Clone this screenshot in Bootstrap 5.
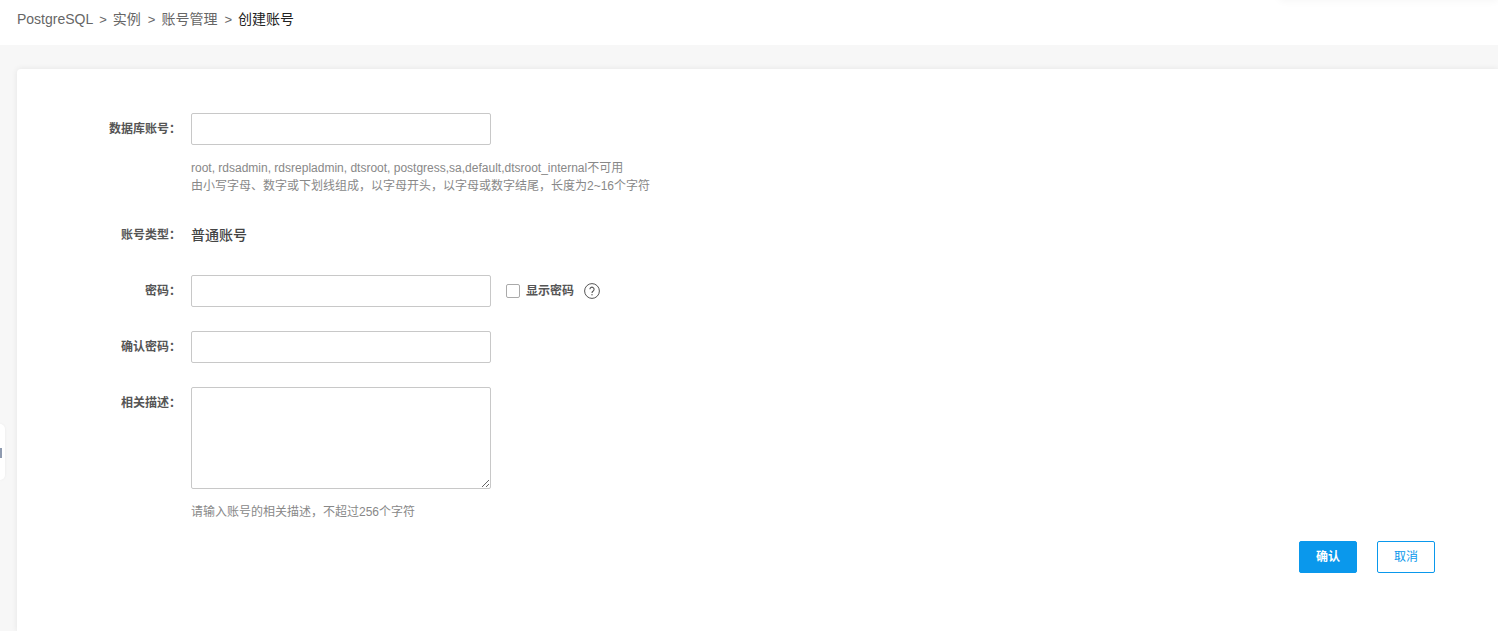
<!DOCTYPE html>
<html lang="zh-CN">
<head>
<meta charset="utf-8">
<title>创建账号</title>
<link href="https://cdn.jsdelivr.net/npm/bootstrap@5.3.0/dist/css/bootstrap.min.css" rel="stylesheet">
<style>
html,body{height:100%;overflow:hidden}
body{background:#f7f7f7;font-family:"Liberation Sans","Noto Sans CJK SC",sans-serif;font-size:12px;color:#333}
.crumb-bar{height:45px;background:#fff;font-size:14px;padding:0 0 6px 17px;color:#666;position:relative}
.crumb-bar .sep{margin:0 6px 0 7px;color:#666;font-size:13px}
.crumb-bar a{color:#666;text-decoration:none}
.crumb-bar a:first-of-type{margin-right:-1px}
.crumb-bar .cur{color:#222}
.top-shade{position:absolute;right:0;top:-10px;width:218px;height:10px;box-shadow:0 0 10px rgba(0,0,0,.05)}
.content-wrap{padding:24px 0 0 17px;height:calc(100% - 45px)}
.panel{background:#fff;height:100%;border-radius:4px 0 0 0;box-shadow:0 0 6px rgba(0,0,0,.08);padding-top:44px}
.f-row{display:flex}
.f-label{width:164px;flex:none;text-align:right;font-weight:700;color:#555;line-height:32px;font-size:12px}
.f-body{margin-left:10px}
.f-input.form-control{width:300px;height:32px;padding:0 8px;border:1px solid #c8c8c8;border-radius:2px;font-size:12px;box-shadow:none}
textarea.f-input.form-control{height:102px;min-height:0;display:block;padding:6px 8px}
.hint{color:#888;line-height:18px;font-size:12px;margin-top:14px}
.val{line-height:32px;font-size:14px;font-weight:500;color:#444}
.val-row{margin:24px 0}
.show-pw{margin-left:15px;height:32px;font-weight:700;color:#555}
.show-pw .form-check-input{width:14px;height:14px;margin:0 6px 0 0;border:1px solid #aaa;border-radius:2px;float:none}
.help-ic{margin-left:10px;display:block}
.btn-ok.btn,.btn-no.btn{width:58px;height:32px;padding:0;font-size:12px;border-radius:2px;line-height:30px}
.btn-ok.btn{background:#0a98ec;border:1px solid #0a98ec;color:#fff;font-weight:700}
.btn-no.btn{background:#fff;border:1px solid #0a98ec;color:#0a98ec}
.actions{padding-right:63px;margin-top:20px;gap:20px}
.side-tab{position:absolute;left:0;top:424px;width:5px;height:56px;background:#fff;border-radius:0 5px 5px 0;box-shadow:0 0 3px rgba(0,0,0,.06)}
.side-tab i{position:absolute;left:0;top:24px;width:2px;height:10px;background:#8f9bb0;display:block}
</style>
</head>
<body>
<div class="crumb-bar d-flex align-items-center">
  <span class="top-shade"></span>
  <a href="#">PostgreSQL</a><span class="sep">&gt;</span><a href="#">实例</a><span class="sep">&gt;</span><a href="#">账号管理</a><span class="sep">&gt;</span><span class="cur">创建账号</span>
</div>
<div class="content-wrap">
  <div class="panel">
    <div class="f-row">
      <label class="f-label">数据库账号：</label>
      <div class="f-body">
        <input class="form-control f-input" type="text">
        <div class="hint">root, rdsadmin, rdsrepladmin, dtsroot, postgress,sa,default,dtsroot_internal不可用<br>由小写字母、数字或下划线组成，以字母开头，以字母或数字结尾，长度为2~16个字符</div>
      </div>
    </div>
    <div class="f-row val-row">
      <label class="f-label">账号类型：</label>
      <div class="f-body val">普通账号</div>
    </div>
    <div class="f-row">
      <label class="f-label">密码：</label>
      <div class="f-body d-flex align-items-center">
        <input class="form-control f-input" type="password">
        <label class="show-pw d-flex align-items-center"><input class="form-check-input" type="checkbox">显示密码</label>
        <svg class="help-ic" width="16" height="16" viewBox="0 0 16 16" fill="none"><circle cx="8" cy="8" r="7.4" stroke="#555"/><path d="M5.9 6.3a2.1 2.1 0 1 1 3.3 1.7c-.8.5-1.2.9-1.2 1.9" stroke="#555" stroke-width="1.1"/><circle cx="8" cy="11.8" r=".7" fill="#555"/></svg>
      </div>
    </div>
    <div class="f-row mt-4">
      <label class="f-label">确认密码：</label>
      <div class="f-body"><input class="form-control f-input" type="password"></div>
    </div>
    <div class="f-row mt-4">
      <label class="f-label">相关描述：</label>
      <div class="f-body">
        <textarea class="form-control f-input"></textarea>
        <div class="hint">请输入账号的相关描述，不超过256个字符</div>
      </div>
    </div>
    <div class="d-flex justify-content-end actions">
      <button type="button" class="btn btn-ok">确认</button>
      <button type="button" class="btn btn-no">取消</button>
    </div>
  </div>
</div>
<div class="side-tab"><i></i></div>
</body>
</html>
